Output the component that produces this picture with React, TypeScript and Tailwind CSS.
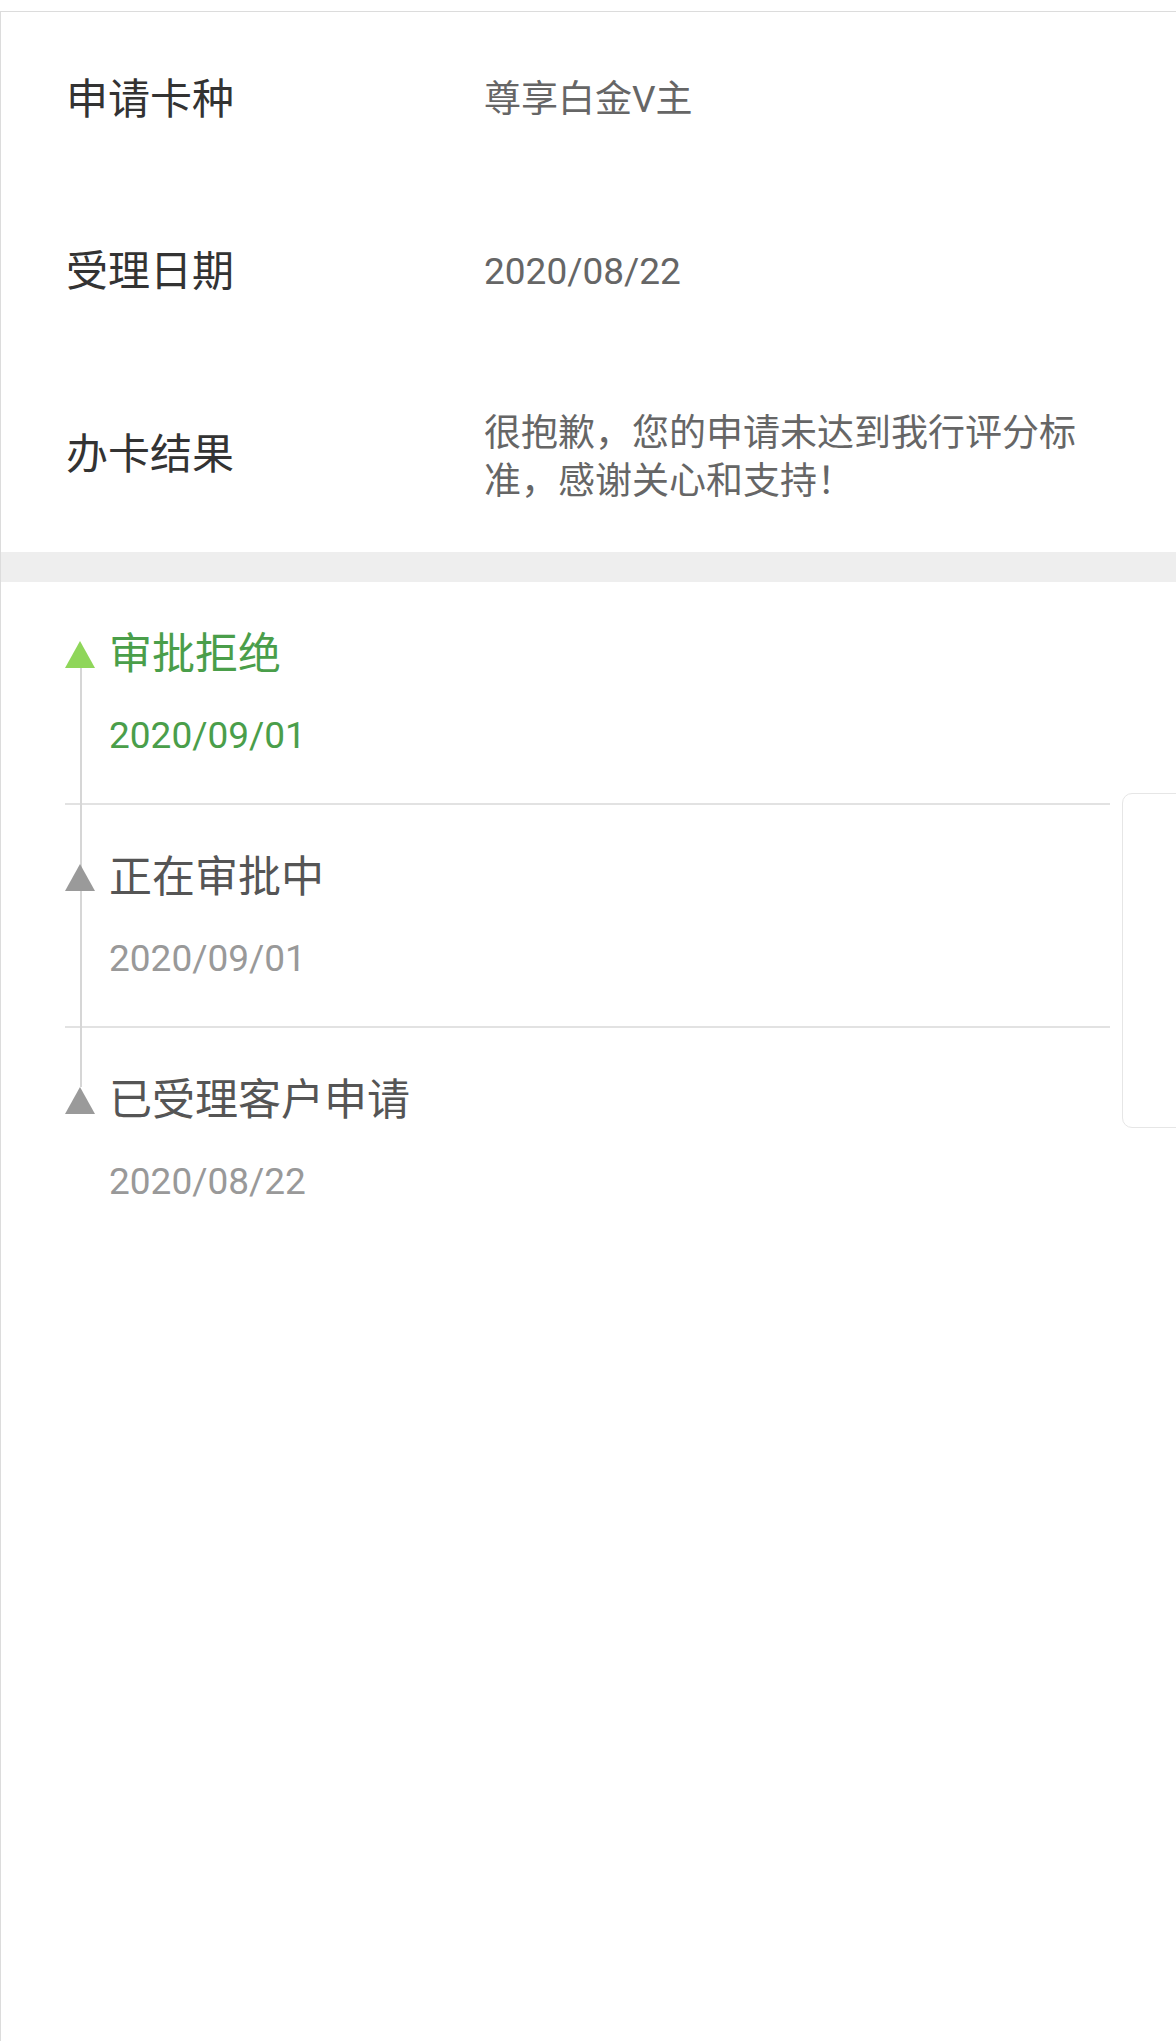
import React from "react";

const rows = [
  { label: "申请卡种", value: "尊享白金V主", h: "h-[175px]", extra: "" },
  { label: "受理日期", value: "2020/08/22", h: "h-[170px]", extra: "" },
  { label: "办卡结果", value: "很抱歉，您的申请未达到我行评分标准，感谢关心和支持！", h: "h-[195px]", extra: "mt-[6px]" },
];

const steps = [
  { title: "审批拒绝", date: "2020/09/01", active: true },
  { title: "正在审批中", date: "2020/09/01", active: false },
  { title: "已受理客户申请", date: "2020/08/22", active: false },
];

function Tri({ color }: { color: string }) {
  return (
    <svg width="30" height="27" viewBox="0 0 30 27" className="relative z-10 shrink-0">
      <polygon points="15,0 30,27 0,27" fill={color} />
    </svg>
  );
}

export default function App() {
  return (
    <div className="relative min-h-[2041px] bg-white pt-[11px] font-[Roboto,'Noto_Sans_CJK_SC',sans-serif]">
      <div className="min-h-[2030px] border-l border-t border-[#dcdcdc]">
        {rows.map((r, i) => (
          <div key={i} className={`flex items-center pl-[65px] ${r.h}`}>
            <div className="w-[418px] shrink-0 text-[42px] leading-[48px] text-[#333333]">{r.label}</div>
            <div className={`w-[620px] text-[37px] leading-[48px] text-[#666666] ${r.extra}`}>{r.value}</div>
          </div>
        ))}
        <div className="h-[30px] bg-[#eeeeee]" />
        <div className="relative pl-[64px] pr-[66px]">
          <div className="absolute left-[79px] top-[85px] h-[420px] w-[2px] bg-[#d6d6d6]" />
          {steps.map((s, i) => (
            <div
              key={i}
              className={`pt-[48px] pb-[46px] ${i < steps.length - 1 ? "border-b-2 border-[#e2e2e2]" : ""}`}
            >
              <div className="flex h-[48px] items-center gap-[14px]">
                <Tri color={s.active ? "#8fd65a" : "#9a9a9a"} />
                <div
                  className={`text-[43px] leading-[48px] ${s.active ? "text-[#4a9e4a]" : "text-[#555555]"}`}
                >
                  {s.title}
                </div>
              </div>
              <div
                className={`mt-[37px] pl-[44px] text-[37px] leading-[42px] ${s.active ? "text-[#4a9e4a]" : "text-[#999999]"}`}
              >
                {s.date}
              </div>
            </div>
          ))}
        </div>
      </div>
      <div className="absolute left-[1122px] top-[793px] h-[335px] w-[70px] rounded-[10px] border border-[#e6e6e6] bg-white" />
    </div>
  );
}
